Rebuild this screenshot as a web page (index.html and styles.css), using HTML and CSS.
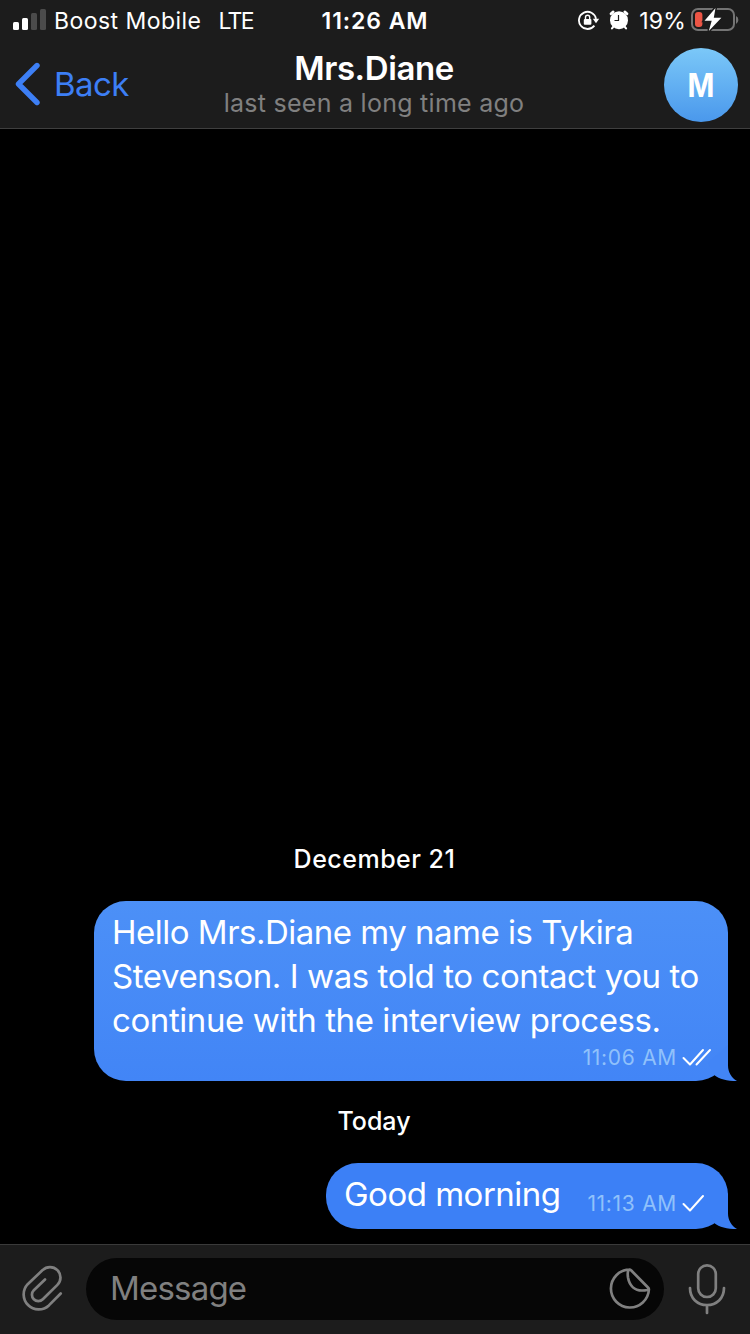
FILE: index.html
```html
<!DOCTYPE html>
<html lang="en">
<head>
    <meta charset="UTF-8">
    <meta name="viewport" content="width=device-width, initial-scale=1.0">
    <title>Mrs.Diane</title>
    <link rel="stylesheet" href="styles.css">
</head>
<body>
    <div class="app">
        <header class="header">
            <!-- Status bar -->
            <div class="status-bar">
                <div class="status-left">
                    <svg class="signal" width="34" height="22" viewBox="0 0 34 22">
                        <rect x="0" y="13" width="6" height="8" rx="1.5" fill="#fff"/>
                        <rect x="9" y="9" width="6" height="12" rx="1.5" fill="#fff"/>
                        <rect x="18" y="4" width="6" height="17" rx="1.5" fill="#4b4b4b"/>
                        <rect x="27" y="0" width="6" height="21" rx="1.5" fill="#4b4b4b"/>
                    </svg>
                    <span class="carrier">Boost Mobile</span>
                    <span class="network">LTE</span>
                </div>
                <div class="clock">11:26 AM</div>
                <div class="status-right">
                    <svg class="lock" width="22" height="20" viewBox="0 0 22 20">
                        <path d="M16.4 15.6A8.6 8.6 0 1 1 18 8.8" fill="none" stroke="#fff" stroke-width="1.8"/>
                        <path d="M14.8 8.8h6.4l-3.2 4.4z" fill="#fff"/>
                        <rect x="5.8" y="8.9" width="7.6" height="5.8" rx="1" fill="#fff"/>
                        <path d="M7.5 9.2V7.4a2.1 2.1 0 0 1 4.2 0V9.2" fill="none" stroke="#fff" stroke-width="1.4"/>
                    </svg>
                    <svg class="alarm" width="20" height="20" viewBox="0 0 20 20">
                        <path d="M2 3.8L4.2 1.8M18 3.8L15.8 1.8" stroke="#fff" stroke-width="2.6" stroke-linecap="round"/>
                        <path d="M4.6 16.4L3 18.4M15.4 16.4L17 18.4" stroke="#fff" stroke-width="2.2" stroke-linecap="round"/>
                        <circle cx="10" cy="10.2" r="9" fill="#fff"/>
                        <path d="M9.5 5V10.5H5.5" fill="none" stroke="#1c1c1c" stroke-width="1.2"/>
                    </svg>
                    <span class="percent">19%</span>
                    <svg class="battery" width="48" height="26" viewBox="0 0 48 26">
                        <rect x="1" y="2" width="42" height="21" rx="6" fill="none" stroke="#747474" stroke-width="2"/>
                        <path d="M45 9v8q2.4-1.2 2.4-4T45 9z" fill="#747474"/>
                        <rect x="4" y="5" width="7.4" height="15" rx="3" fill="#ec5545"/>
                        <path d="M24.5 1L13.5 13.8h7.2L17.8 24 30.4 10.8h-7.6z" fill="#fff" stroke="#1c1c1c" stroke-width="3" paint-order="stroke"/>
                    </svg>
                </div>
            </div>

            <!-- Navigation bar -->
            <div class="nav-bar">
                <a class="back">
                    <svg width="26" height="44" viewBox="0 0 26 44">
                        <path d="M22 3.5L3.5 22 22 40.5" fill="none" stroke="#3d7ff5" stroke-width="5.4" stroke-linecap="round" stroke-linejoin="round"/>
                    </svg>
                    <span class="back-label">Back</span>
                </a>
                <div class="title">
                    <div class="name">Mrs.Diane</div>
                    <div class="last-seen">last seen a long time ago</div>
                </div>
                <div class="avatar"><span class="initial">M</span></div>
            </div>
        </header>

        <main class="chat">
            <div class="date date-first">December 21</div>
            <div class="bubble bubble-long">
                <p class="text">Hello Mrs.Diane my name is Tykira<br><span class="line-wide">Stevenson. I was told to contact you to<br>continue with the interview process.</span></p>
                <div class="meta">
                    <span class="time">11:06 AM</span>
                    <svg class="checks" width="30" height="18" viewBox="0 0 30 18">
                        <path d="M1.5 10l6.5 6.5L21 2M14.5 16.5L28 2" fill="none" stroke="#fff" stroke-width="2" stroke-linecap="round" stroke-linejoin="round"/>
                    </svg>
                </div>
                <svg class="tail" width="32" height="36" viewBox="0 0 32 36">
                    <path d="M22 0V20.5C22 27 25.5 33 31 36C21 36 13 34 8.5 30.2L2 18z" fill="#4285f6"/>
                </svg>
            </div>
            <div class="date date-second">Today</div>
            <div class="bubble bubble-short">
                <p class="text">Good morning</p>
                <div class="meta">
                    <span class="time">11:13 AM</span>
                    <svg class="checks" width="30" height="18" viewBox="0 0 30 18">
                        <path d="M1.5 10l6.5 6.5L21 2" fill="none" stroke="#fff" stroke-width="2" stroke-linecap="round" stroke-linejoin="round"/>
                    </svg>
                </div>
                <svg class="tail" width="32" height="36" viewBox="0 0 32 36">
                    <path d="M22 0V20.5C22 27 25.5 33 31 36C21 36 13 34 8.5 30.2L2 18z" fill="#3c80f6"/>
                </svg>
            </div>
        </main>

        <footer class="composer">
            <svg class="clip" width="44" height="48" viewBox="0 0 44 48">
                <path d="M25 14.5L13.8 25.3A6.3 6.3 0 0 0 22.8 34.3L37.4 19.9A10.4 10.4 0 0 0 22.6 5.1L7.7 19.2A15 15 0 0 0 28.9 40.4L40.7 28.5" fill="none" stroke="#808080" stroke-width="2.7" stroke-linecap="round"/>
            </svg>
            <div class="input">
                <span class="placeholder">Message</span>
                <svg width="42" height="42" viewBox="0 0 42 42">
                    <path d="M20.5 1.5A19 19 0 1 0 39.9 21.5Q40 20.5 39 19.5L22.3 2.5Q21.3 1.5 20.5 1.5C18 2.5 18.5 6 19 9.5C20.5 18 26 22.5 33 22.5C36 22.5 39 22.3 39.9 21" fill="none" stroke="#808080" stroke-width="2.7" stroke-linejoin="round"/>
                </svg>
            </div>
            <svg class="mic" width="38" height="52" viewBox="0 0 38 52">
                <rect x="10.2" y="2.3" width="17.6" height="31.7" rx="8.8" fill="none" stroke="#808080" stroke-width="2.7"/>
                <path d="M2 25C2 35.5 9.500 42 19 42S36 35.5 36 25M19 42V50" fill="none" stroke="#808080" stroke-width="2.7" stroke-linecap="round"/>
            </svg>
        </footer>
    </div>
</body>
</html>
```
FILE: styles.css
```css
* { box-sizing: border-box; }
body { margin: 0; background: #000; color: #fff; font-family: Inter, "Liberation Sans", sans-serif; }
svg { display: block; flex: none; }
.app { display: flex; flex-direction: column; width: 750px; height: 1334px; overflow: hidden; }

.header { height: 129px; background: #1c1c1c; border-bottom: 1px solid #3f3f3f; }
.status-bar { display: grid; grid-template-columns: 1fr auto 1fr; align-items: center; height: 40px; padding: 0 11px; font-size: 23px; line-height: 38px; white-space: nowrap; }
.status-left, .status-right { display: flex; align-items: center; }
.status-left { padding-left: 2px; }
.status-right { justify-content: flex-end; }
.carrier, .network, .clock, .percent { padding-top: 2px; }
.carrier { margin-left: 7px; letter-spacing: 0.45px; }
.network { margin-left: 17px; letter-spacing: -1.6px; }
.clock { font-weight: 600; letter-spacing: 0.9px; }
.alarm { margin-left: 9px; }
.percent { margin-left: 10px; letter-spacing: 0.2px; }
.battery { margin-left: 5px; }

.nav-bar { display: grid; grid-template-columns: 1fr auto 1fr; height: 88px; padding: 0 12px 0 10px; }
.back { display: flex; align-items: center; height: 88px; padding-left: 5px; color: #3d7ff5; font-size: 33px; letter-spacing: -0.6px; }
.back-label { margin-left: 13px; }
.title { padding-top: 8px; text-align: center; white-space: nowrap; }
.name { font-size: 33px; line-height: 40px; font-weight: 600; letter-spacing: -0.4px; }
.last-seen { font-size: 25px; line-height: 30px; color: #808080; letter-spacing: 0.27px; }
.avatar { justify-self: end; width: 74px; height: 74px; margin-top: 8px; border-radius: 50%; background: linear-gradient(#7bc8f8, #4a98ec); font-size: 32px; line-height: 76px; font-weight: 700; text-align: center; }
.initial { display: inline-block; transform: scaleX(0.9); }

.chat { flex: 1; display: flex; flex-direction: column; align-items: flex-end; justify-content: flex-end; padding: 0 22px 15px; }
.date { align-self: center; font-size: 25px; line-height: 30px; font-weight: 500; }
.date-first { margin-bottom: 27px; padding-right: 1px; letter-spacing: 0.5px; }
.date-second { margin: 25px 0 27px; padding-right: 2px; }
.bubble { position: relative; border-radius: 32px; }
.bubble-long { width: 634px; height: 180px; padding: 9px 16px 0 18px; background: linear-gradient(#4c90f7, #4285f6); }
.bubble-short { display: flex; justify-content: space-between; width: 402px; height: 66px; padding: 9px 16px 0 18px; background: #3c80f6; }
.text { margin: 0; font-size: 33px; line-height: 44px; letter-spacing: -0.5px; white-space: nowrap; }
.line-wide { letter-spacing: -0.42px; }
.meta { display: flex; align-items: center; justify-content: flex-end; height: 30px; font-size: 21px; letter-spacing: 0.7px; color: #90c1fb; }
.bubble-short .meta { margin-top: 16px; }
.checks { margin-left: 5px; }
.tail { position: absolute; right: -10px; bottom: 0; }

.composer { display: flex; align-items: center; height: 90px; padding: 0 24px 2px 20px; background: #1c1c1c; border-top: 1px solid #3a3a3a; }
.input { display: flex; align-items: center; justify-content: space-between; width: 579px; height: 62px; margin: 0 24px 0 22px; padding: 0 13px 0 24px; border-radius: 31px; background: #060606; }
.placeholder { padding-bottom: 1px; font-size: 33px; letter-spacing: -0.8px; color: #808080; }
```
